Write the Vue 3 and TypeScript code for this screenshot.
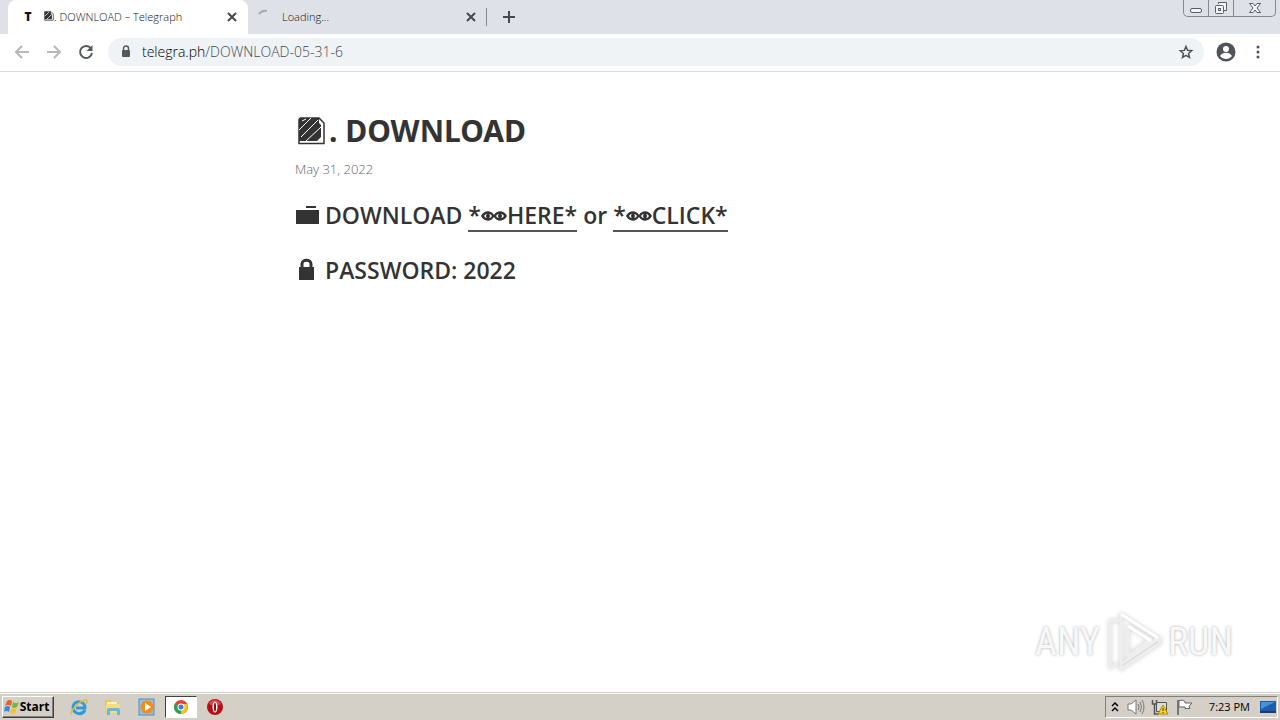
<script setup lang="ts">
import { ref } from 'vue'

interface Download { label: string; href: string }

const address = ref('telegra.ph/DOWNLOAD-05-31-6')
const host = 'telegra.ph'
const path = '/DOWNLOAD-05-31-6'
const downloads: Download[] = [
  { label: 'HERE', href: '#here' },
  { label: 'CLICK', href: '#click' },
]
</script>

<template>
  <div class="desktop">
    <header class="browser">
      <div class="tabstrip">
        <div class="tab active">
          <span class="favicon">T</span>
          <span class="tab-title">
            <svg class="mini" viewBox="0 0 28 28" aria-hidden="true"><path d="M2 1h17l7 7v18H2z" fill="#fff" stroke="#333" stroke-width="2" /><path d="M2 2h17v5l3 1v15H2z" fill="#333" /><path d="M3 14 14 3M8 23 22 9" stroke="#fff" stroke-width="2" /></svg>. DOWNLOAD – Telegraph
          </span>
          <button class="close" aria-label="Close tab"><svg viewBox="0 0 10 10"><path d="m1 1 8 8M9 1 1 9" /></svg></button>
        </div>
        <div class="tab">
          <svg class="spinner" viewBox="0 0 16 16" aria-hidden="true"><path d="M3 5q3-4 8-3" /></svg>
          <span class="tab-title">Loading...</span>
          <button class="close" aria-label="Close tab"><svg viewBox="0 0 10 10"><path d="m1 1 8 8M9 1 1 9" /></svg></button>
        </div>
        <span class="divider"></span>
        <button class="new-tab" aria-label="New tab"><svg viewBox="0 0 12 12"><path d="M6 0v12M0 6h12" /></svg></button>
        <div class="window-controls">
          <button class="wc" aria-label="Minimize"><svg width="14" height="16" viewBox="0 0 14 16"><rect x="1.5" y="8.5" width="11" height="4" rx="1.5" /></svg></button>
          <button class="wc" aria-label="Restore"><svg width="14" height="16" viewBox="0 0 14 16"><path d="M4.5 4V2.5h8v8H10" /><rect x="1.5" y="5.5" width="8" height="8" rx="1" /><rect x="4.5" y="8.5" width="2" height="2" /></svg></button>
          <button class="wc wide" aria-label="Close"><svg width="14" height="16" viewBox="0 0 14 16"><path d="M1.5 3.500H5l2 2.500 2-2.500h3.500L9 8l3.500 4.500H9L7 10l-2 2.500H1.500L5 8z" /></svg></button>
        </div>
      </div>
      <nav class="toolbar">
        <button class="tool dim" aria-label="Back"><svg viewBox="0 0 16 16"><path d="M15 8H2M8 2 2 8l6 6" /></svg></button>
        <button class="tool dim" aria-label="Forward"><svg viewBox="0 0 16 16"><path d="M1 8h13M8 2l6 6-6 6" /></svg></button>
        <button class="tool" aria-label="Reload"><svg viewBox="0 0 16 16"><path d="M13 4.500A6 6 0 1 0 14 9" /><path d="M14.500 1v6h-6z" fill="#55585c" stroke="none" /></svg></button>
        <div class="omnibox">
          <svg class="secure" viewBox="0 0 10 13" aria-hidden="true"><path d="M2.500 6V3.500a2.500 2.500 0 0 1 5 0V6" fill="none" stroke="#55585c" stroke-width="1.500" /><rect x="1" y="5" width="8" height="7" rx="1" fill="#55585c" /></svg>
          <label class="address">
            <span class="url" aria-hidden="true"><b>{{ host }}</b>{{ path }}</span>
            <input v-model="address" type="text" aria-label="Address" />
          </label>
          <button class="star" aria-label="Bookmark"><svg viewBox="0 0 16 16"><path d="m8 2.500 1.600 3.800 4.100.4-3.100 2.700.9 4L8 11.400l-3.500 2.100.9-4-3.100-2.700 4.100-.4z" /></svg></button>
        </div>
        <button class="profile" aria-label="Profile"><svg viewBox="0 0 20 20"><circle cx="10" cy="10" r="9.500" fill="#505357" /><circle cx="10" cy="7" r="3" fill="#fff" /><path d="M4 14c2-4.500 10-4.500 12 0-3 4-9 4-12 0z" fill="#fff" /></svg></button>
        <button class="menu" aria-label="Menu"><svg viewBox="0 0 4 14"><circle cx="2" cy="2" r="1.500" /><circle cx="2" cy="7" r="1.500" /><circle cx="2" cy="12" r="1.500" /></svg></button>
      </nav>
    </header>

    <main class="page">
      <article>
        <h1><svg class="doc" viewBox="0 0 28 28" aria-hidden="true"><path d="M1 2.500 2.500 1H21l5 5v20.500H1z" fill="#fff" stroke="#333" stroke-width="1.500" /><path d="M1 1h20v5l2 2v12l-4 4H1z" fill="#333" /><path d="M1 13 13 1M3 20 20 3M8 24 23 10" stroke="#fff" stroke-width="1" /><path d="M4 4 8 2" stroke="#fff" stroke-width="1" /></svg>. DOWNLOAD</h1>
        <time datetime="2022-05-31">May 31, 2022</time>
        <h3 class="line"><svg class="glyph" viewBox="0 0 24 24" aria-hidden="true"><path d="M1 7h23v14H1zM11 3h10v2H11z" fill="#333" /></svg><span>DOWNLOAD <template v-for="(item, i) in downloads" :key="item.label"><template v-if="i"> or </template><a :href="item.href">*<svg class="eyes" viewBox="0 0 26 12" aria-hidden="true"><path d="M0 6C3 0 10 0 13 5c3-5 10-5 13 1-3 6-10 6-13 1C10 12 3 12 0 6z" fill="#333" /><path d="M3 6q1-2 3-2-2 2 0 4-2 0-3-2zM11 6q-1-2-3-2 2 2 0 4 2 0 3-2zM15 6q1-2 3-2-2 2 0 4-2 0-3-2zM23 6q-1-2-3-2 2 2 0 4 2 0 3-2z" fill="#fff" /></svg>{{ item.label }}*</a></template></span></h3>
        <h3 class="line"><svg class="glyph" viewBox="0 0 24 24" aria-hidden="true"><path d="M7 11V6c0-5 9-5 9 0v5" fill="none" stroke="#333" stroke-width="3" /><path d="M4 9h15v13H4z" fill="#333" /></svg><span>PASSWORD: 2022</span></h3>
      </article>
      <div class="watermark">
        <span>ANY</span>
        <svg viewBox="0 0 60 64" aria-hidden="true">
          <path d="M17 4v50l37-26zM17 4v6L6 11v46l8-3M17 54v5l39-26v-5zM24 16v30l23-17z" />
          <path d="m17 4 37 24M24 16l23 15" class="lit" />
        </svg>
        <span>RUN</span>
      </div>
    </main>

    <footer class="taskbar">
      <button class="start">
        <svg viewBox="0 0 16 16" aria-hidden="true"><path d="M3 2q3-2 5 0L7 7Q4 5 1 7z" fill="#e8612c" /><path d="M9 3q3 2 6 0l-2 5q-3 2-5 0z" fill="#78b83c" /><path d="M1 8q3-2 5 0l-1 5q-3-2-5 0z" fill="#3b89d0" /><path d="M8 9q3 2 5 0l-2 5q-3 2-5 0z" fill="#f6bf2c" /></svg>Start
      </button>
      <button class="app" aria-label="Internet Explorer"><svg viewBox="0 0 18 18"><path d="M15 12c-3 6-12 4-12-3s12-7 12 1H6" fill="none" stroke="#2d9be0" stroke-width="3" /><path d="M2 16C-2 15 10 2 16 2c2 0 1 3 0 4" fill="none" stroke="#e9b52d" stroke-width="1.500" /></svg></button>
      <button class="app" aria-label="Explorer"><svg viewBox="0 0 18 18"><path d="M1 2h6l1 2h7v11H1z" fill="#e9c75b" /><path d="M3 4h10v7H3z" fill="#fff5bc" /><path d="M2 6h14v9H2z" fill="#f3dc83" /><path d="M3 17v-5q0-2 2-2h9q2 0 2 2v5h-3v-4H6v4z" fill="#64b7df" /></svg></button>
      <button class="app" aria-label="Media Player"><svg viewBox="0 0 18 18"><rect x="1" y="1" width="15" height="16" fill="#8ec2e8" stroke="#558dbb" /><circle cx="9" cy="9" r="6.500" fill="#f48b17" /><path d="m5 3 8 0 0 12-8 0z" fill="#f48b17" /><path d="m7 5 6 4-6 4z" fill="#fff" /></svg></button>
      <button class="app pressed" aria-label="Chrome"><svg viewBox="0 0 18 18"><circle cx="9" cy="9" r="7" fill="#e34335" /><path d="M9 9 3 5.500A7 7 0 0 0 9 16z" fill="#2aa450" /><path d="M9 9h0l0 7a7 7 0 0 0 6-10H9z" fill="#fbc419" /><circle cx="9" cy="9" r="3.500" fill="#fff" /><circle cx="9" cy="9" r="2.500" fill="#367fe4" /></svg></button>
      <button class="app" aria-label="Opera"><svg viewBox="0 0 18 18"><circle cx="9" cy="9" r="8" fill="#b90d18" /><path d="M3 6a6.500 6.500 0 0 1 12 0q-6 3-12 0z" fill="#d84a50" /><ellipse cx="9" cy="9" rx="2.500" ry="5.500" fill="#fff" /><ellipse cx="9" cy="9" rx="1" ry="4.500" fill="#8f0711" /></svg></button>
      <div class="tray">
        <button aria-label="Show hidden icons" class="chev"><svg viewBox="0 0 8 10"><path d="m1 4 3-3 3 3M1 9l3-3 3 3" /></svg></button>
        <svg class="tray-icon" viewBox="0 0 18 18" role="img" aria-label="Volume"><path d="M1 6h3l5-4v14l-5-4H1z" fill="#fff" stroke="#777" /><path d="M11 6q2 3 0 6M13 4q3 5 0 10M15 2q4 7 0 14" fill="none" stroke="#777" /></svg>
        <svg class="tray-icon" viewBox="0 0 18 18" role="img" aria-label="Network"><path d="M5.500 4.500h10v9h-10z" fill="#d8dde0" stroke="#555" /><path d="M1.500 2v4h4V2M3.500 6v10h4" fill="none" stroke="#555" stroke-width="1.500" /><path d="m12 7 5 9H7z" fill="#ffd51c" stroke="#b58a08" /><path d="M12 10v3m0 1v1" stroke="#333" /></svg>
        <svg class="tray-icon" viewBox="0 0 18 18" role="img" aria-label="Action Center"><path d="M3 2v15" stroke="#777" stroke-width="2" /><path d="M4 2.500q4-1 6 1v1.500h7l-3 3 1 2.500h-5V9H4z" fill="#fff" stroke="#666" /></svg>
        <time class="clock">7:23 PM</time>
        <svg class="monitor" viewBox="0 0 16 14" role="img" aria-label="Show desktop"><path d="M0 1h16v10H0z" fill="#1f5eae" /><path d="M1 2h14L1 9z" fill="#4a92d8" /><path d="M0 11h16v2H0z" fill="#183c6d" /></svg>
      </div>
    </footer>
  </div>
</template>

<style>
body { margin: 0; }
</style>

<style scoped>
.desktop { display: flex; flex-direction: column; min-height: 100vh; background: #fff; font-family: "Open Sans", "Noto Sans", sans-serif; color: #333; }
button { display: flex; align-items: center; justify-content: center; padding: 0; border: 0; background: none; color: inherit; font: inherit; flex: none; }
svg { display: block; flex: none; }
.tabstrip { display: flex; height: 34px; background: #dee1e8; }
.tab { display: flex; align-items: center; box-sizing: border-box; width: 238px; padding: 0 9px 0 8px; font-size: 11px; font-weight: 300; color: #111; }
.tab.active { width: 240px; margin-left: 8px; padding: 0 10px 0 12px; background: #fff; border-radius: 8px 8px 0 0; }
.tab-title { display: flex; align-items: center; flex: 1; padding-bottom: 2px; white-space: pre; }
.favicon { width: 16px; margin-right: 8px; padding-bottom: 1px; font-weight: 800; text-align: center; font-size: 12px; color: #111; }
.mini { width: 10px; height: 10px; }
.close { width: 12px; height: 16px; }
.close svg { width: 10px; height: 10px; }
.close path, .new-tab path { stroke: #45484d; stroke-width: 2; fill: none; }
.spinner { width: 16px; height: 16px; margin-right: 10px; }
.spinner path { fill: none; stroke: #a7aaaf; stroke-width: 2; }
.divider { width: 1px; height: 18px; margin: 8px 0; background: #85888e; }
.new-tab { width: 44px; }
.new-tab svg { width: 12px; height: 12px; }
.window-controls { display: flex; height: 17px; margin: 0 4px 0 auto; box-sizing: border-box; border: 1px solid #85888e; border-top: 0; border-radius: 0 0 5px 5px; }
.wc { width: 24px; }
.wc + .wc { width: 25px; border-left: 1px solid #85888e; }
.wc.wide.wide { width: 42px; }
.wc svg { fill: #f5f6f8; stroke: #5a5d63; }
.toolbar { display: flex; align-items: center; box-sizing: border-box; height: 38px; padding: 0 14px 2px 6px; border-bottom: 1px solid #d8dadd; }
.tool { width: 32px; height: 32px; }
.tool svg { width: 16px; height: 16px; fill: none; stroke: #55585c; stroke-width: 2; }
.tool.dim svg { stroke: #b5b7ba; }
.omnibox { display: flex; align-items: center; flex: 1; height: 28px; margin-left: 6px; padding: 0 10px 0 13px; border-radius: 14px; background: #f0f3f5; }
.secure { width: 10px; height: 13px; margin-right: 11px; }
.address { display: grid; flex: 1; font-size: 14px; font-weight: 300; line-height: 20px; }
.url, .address input { grid-area: 1 / 1; }
.url { color: #45494e; }
.url b { font-weight: 300; color: #000; }
.address input { min-width: 0; padding: 0; border: 0; outline: 0; background: none; font: inherit; color: transparent; }
.star svg { width: 16px; height: 16px; fill: none; stroke: #505357; stroke-width: 1.5; }
.profile { margin-left: 12px; }
.profile svg { width: 20px; height: 20px; }
.menu { width: 16px; margin-left: 14px; }
.menu svg { width: 4px; height: 14px; fill: #505357; }
.page { display: flex; flex-direction: column; flex: 1; }
article { box-sizing: border-box; width: 100%; max-width: 732px; margin: 0 auto; padding: 38px 21px 0; }
h1, h3 { display: flex; align-items: center; margin: 0; color: #333; font-family: "Noto Sans", sans-serif; font-weight: 700; }
h1 { font-size: 30px; line-height: 42px; white-space: pre; }
.doc { width: 28px; height: 28px; margin: 0 3px; }
article time { display: block; margin-top: 7px; color: #666; font-size: 13px; font-weight: 300; line-height: 20px; }
.line { min-height: 36px; margin-top: 18px; font-family: "Open Sans", "Noto Sans", sans-serif; font-size: 23px; font-weight: 650; line-height: 36px; }
.glyph { width: 24px; height: 24px; margin-right: 6px; }
.line + .line { margin-top: 19px; }
.line a { display: inline-block; border-bottom: 2px solid #555; color: inherit; text-decoration: none; line-height: 30px; }
.eyes { display: inline-block; width: 26px; height: 12px; vertical-align: 2px; }
.watermark { display: flex; align-items: center; align-self: flex-end; gap: 4px; margin: auto 47px 18px 0; color: #f8f8f8; font: 38px/64px "Liberation Sans Narrow", "Roboto Condensed", sans-serif; text-shadow: 0 0 3px #aaa; }
.watermark svg { width: 60px; height: 64px; filter: drop-shadow(0 0 2px #ccc); }
.watermark path { fill: none; stroke: #eee; stroke-width: 3; stroke-linejoin: round; }
.watermark .lit { stroke: #fff; }
.taskbar { display: flex; align-items: center; box-sizing: border-box; height: 28px; padding: 2px; border-top: 1px solid #d4d0c8; background: #d4d0c8; box-shadow: inset 0 1px #fff; color: #000; }
.start { height: 22px; width: 52px; margin-right: 9px; padding-right: 3px; box-sizing: border-box; border: 1px solid; border-color: #fff #404040 #404040 #fff; box-shadow: inset -1px -1px #808080; font: bold 12px "Open Sans", sans-serif; }
.start svg { width: 16px; height: 16px; }
.app { width: 32px; height: 22px; margin-right: 2px; box-sizing: border-box; }
.app svg { width: 18px; height: 18px; }
.app.pressed { border: 1px solid; border-color: #404040 #fff #fff #404040; background: #fff; }
.tray { display: flex; align-items: center; box-sizing: border-box; height: 22px; margin-left: auto; padding: 0 1px 0 4px; border: 1px solid; border-color: #808080 #fff #fff #808080; font-size: 11px; }
.chev { width: 10px; margin-right: 7px; }
.chev svg { width: 8px; height: 10px; fill: none; stroke: #000; stroke-width: 1.5; }
.tray-icon { width: 18px; height: 18px; margin-right: 6px; }
.clock { margin: 0 10px; }
.monitor { width: 16px; height: 14px; }
</style>
